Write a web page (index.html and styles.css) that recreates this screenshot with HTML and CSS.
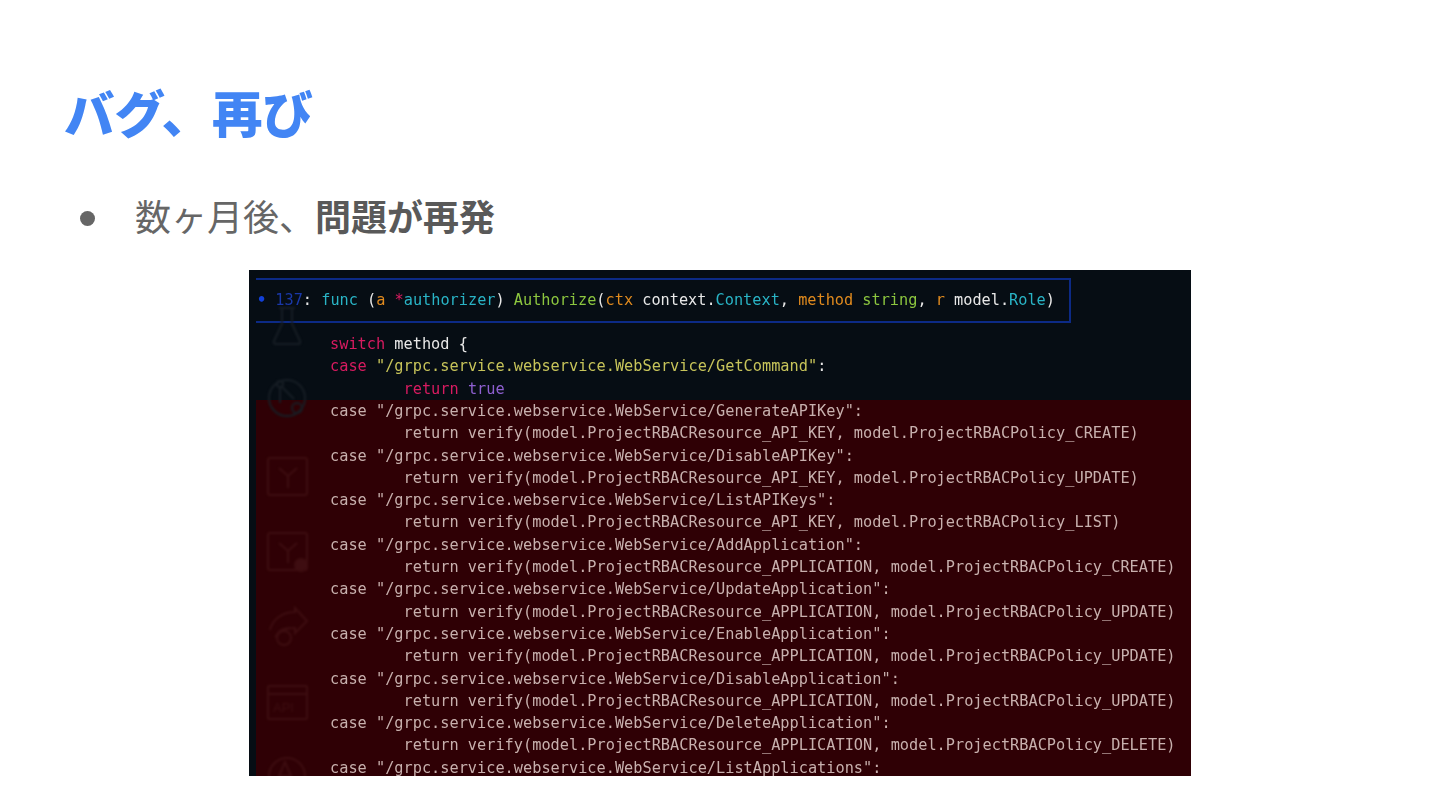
FILE: index.html
```html
<!DOCTYPE html>
<html lang="ja">
<head>
<meta charset="utf-8">
<title>バグ、再び</title>
<link rel="stylesheet" href="styles.css">
</head>
<body>
<main class="slide">
  <h1 class="title">バグ、再び</h1>
  <ul class="bullets">
    <li class="bullet"><span class="dot"></span><span>数ヶ月後、<b>問題が再発</b></span></li>
  </ul>
  <figure class="shot">
    <div class="inner">
      <div class="sig"><span class="pin">•</span> <span class="lineno">137</span><span class="w">:</span> <span class="c">func</span> <span class="w">(</span><span class="o">a</span> <span class="p">*</span><span class="c">authorizer</span><span class="w">)</span> <span class="g">Authorize</span><span class="w">(</span><span class="o">ctx</span> <span class="w">context.</span><span class="c">Context</span><span class="w">,</span> <span class="o">method</span> <span class="g">string</span><span class="w">,</span> <span class="o">r</span> <span class="w">model.</span><span class="c">Role</span><span class="w">)</span></div>
      <pre class="code top-code"><span class="p">switch</span> <span class="w">method {</span>
<span class="p">case</span> <span class="y">"/grpc.service.webservice.WebService/GetCommand"</span><span class="w">:</span>
        <span class="p">return</span> <span class="v">true</span></pre>
      <pre class="code red-code">case "/grpc.service.webservice.WebService/GenerateAPIKey":
        return verify(model.ProjectRBACResource_API_KEY, model.ProjectRBACPolicy_CREATE)
case "/grpc.service.webservice.WebService/DisableAPIKey":
        return verify(model.ProjectRBACResource_API_KEY, model.ProjectRBACPolicy_UPDATE)
case "/grpc.service.webservice.WebService/ListAPIKeys":
        return verify(model.ProjectRBACResource_API_KEY, model.ProjectRBACPolicy_LIST)
case "/grpc.service.webservice.WebService/AddApplication":
        return verify(model.ProjectRBACResource_APPLICATION, model.ProjectRBACPolicy_CREATE)
case "/grpc.service.webservice.WebService/UpdateApplication":
        return verify(model.ProjectRBACResource_APPLICATION, model.ProjectRBACPolicy_UPDATE)
case "/grpc.service.webservice.WebService/EnableApplication":
        return verify(model.ProjectRBACResource_APPLICATION, model.ProjectRBACPolicy_UPDATE)
case "/grpc.service.webservice.WebService/DisableApplication":
        return verify(model.ProjectRBACResource_APPLICATION, model.ProjectRBACPolicy_UPDATE)
case "/grpc.service.webservice.WebService/DeleteApplication":
        return verify(model.ProjectRBACResource_APPLICATION, model.ProjectRBACPolicy_DELETE)
case "/grpc.service.webservice.WebService/ListApplications":</pre>
      <svg class="ghosts" viewBox="0 0 942 506" width="942" height="506" aria-hidden="true">
        <g class="ghost-top">
          <path d="M30 30h16M33 30v16l-8 17a2 2 0 0 0 2 3h22a2 2 0 0 0 2-3l-8-17V30"/>
          <circle cx="38" cy="120" r="18"/>
          <circle cx="31" cy="106" r="3"/>
          <path d="M31 109v16M33 109l12 12"/>
          <circle cx="48" cy="130" r="5"/>
        </g>
        <g class="ghost-red">
          <rect x="19" y="180" width="39" height="37" rx="2"/>
          <path d="M30 190l9 8 9-8M39 198v12"/>
          <rect x="19" y="255" width="39" height="37" rx="2"/>
          <path d="M30 265l9 8 9-8M39 273v12"/>
          <circle cx="52" cy="287" r="6" class="fill"/>
          <path d="M21 352c2-10 12-18 25-18v-4l12 13-12 12v-5c-10 0-16 3-20 9M28 356c3-4 8-6 13-6"/>
          <circle cx="35" cy="360" r="7"/>
          <rect x="19" y="408" width="39" height="33" rx="1"/>
          <path d="M19 416h39"/>
          <text x="24" y="434" class="api">API</text>
          <circle cx="38" cy="498" r="18"/>
          <path d="M36 484l-6 14h12z"/>
        </g>
      </svg>
    </div>
  </figure>
</main>
</body>
</html>
```
FILE: styles.css
```css
html, body {
  margin: 0;
  padding: 0;
  background: #fff;
}

.slide {
  width: 1440px;
  height: 810px;
  overflow: hidden;
  display: flex;
  flex-direction: column;
  font-family: "Noto Sans CJK JP", "Noto Sans", sans-serif;
}

.title {
  margin: 74px 0 0 64px;
  font-size: 50.5px;
  line-height: 74px;
  font-weight: 900;
  color: #4285f4;
}

.bullets {
  list-style: none;
  margin: 42px 0 0 80px;
  padding: 0;
}

.bullet {
  display: flex;
  align-items: center;
  font-size: 36px;
  line-height: 50px;
  color: #666;
}

.bullet b {
  font-weight: 700;
  color: #595959;
}

.dot {
  width: 15px;
  height: 15px;
  margin: 6px 40px 0 0;
  border-radius: 50%;
  background: #666;
}

.shot {
  margin: 30px 0 0 249px;
  width: 942px;
  height: 506px;
  background: #060d14;
  overflow: hidden;
  flex: none;
}

.inner {
  position: relative;
  height: 506px;
  filter: blur(0.45px);
}

.sig {
  box-sizing: border-box;
  margin: 8px 120px 0 7px;
  height: 45px;
  padding-left: 1px;
  border: 2px solid #0c2a86;
  border-left-width: 0;
  font-family: "DejaVu Sans Mono", monospace;
  font-size: 15.24px;
  line-height: 41px;
  white-space: pre;
  color: #e6e6e6;
}

.pin { color: #1240d8; font-weight: 700; }
.lineno { color: #1a38a8; }
.w { color: #e8e8e8; }
.c { color: #29b4c6; }
.o { color: #e08a1e; }
.g { color: #8cc63f; }
.p { color: #d81b60; }
.y { color: #c7c45a; }
.v { color: #8e5fd0; }

.code {
  margin: 0;
  font-family: "DejaVu Sans Mono", monospace;
  font-size: 15.27px;
  line-height: 22.3px;
  white-space: pre;
}

.top-code {
  height: 67px;
  padding: 10px 0 0 81px;
  color: #e6e6e6;
}

.red-code {
  margin-left: 7px;
  padding: 0 0 0 74px;
  height: 380px;
  background: #2f0005;
  color: #c8b0ae;
}

.ghosts {
  position: absolute;
  left: 0;
  top: 0;
  pointer-events: none;
  filter: blur(0.8px);
}

.ghosts g {
  fill: none;
  stroke-width: 2;
}

.ghost-top { stroke: #171e25; }
.ghost-red { stroke: #3e0d11; }
.ghosts .fill { fill: #3e0d11; }

.ghosts .api {
  font-family: "Liberation Sans", sans-serif;
  font-size: 13px;
  fill: #3e0d11;
  stroke: none;
}
```
